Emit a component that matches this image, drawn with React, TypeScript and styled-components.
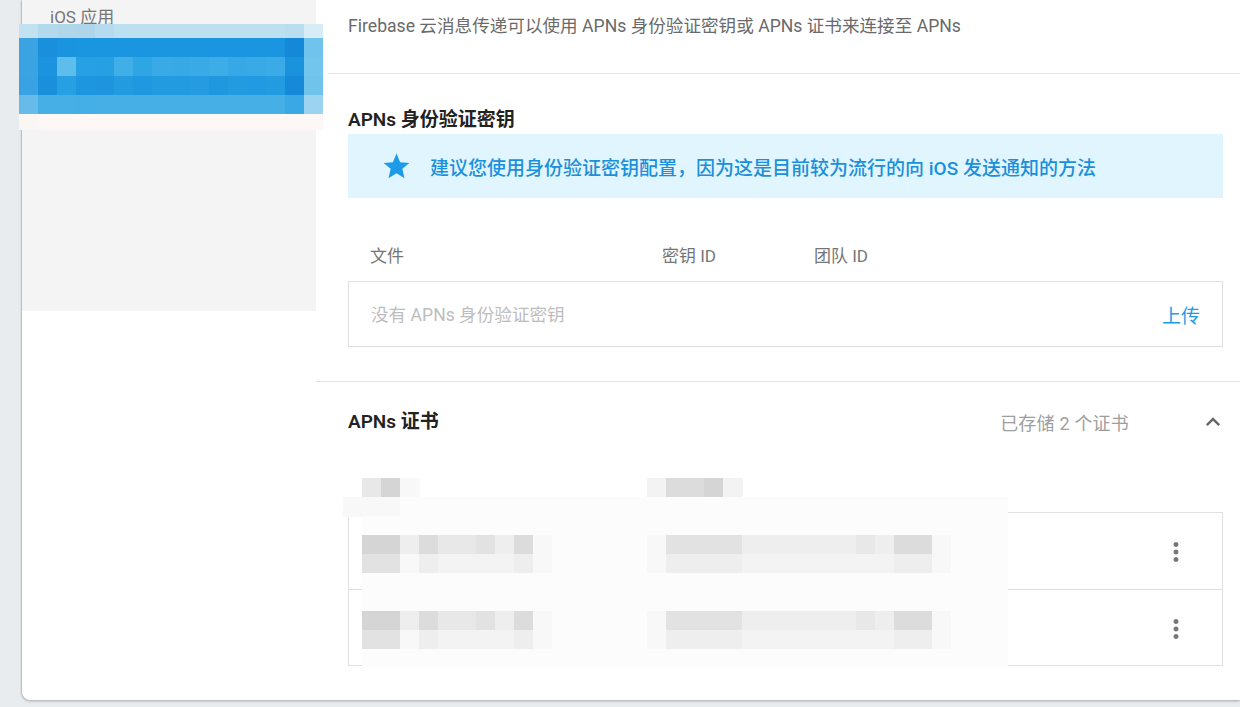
import React from "react";
import styled, { createGlobalStyle } from "styled-components";

const GlobalStyle = createGlobalStyle`
  html, body { margin: 0; padding: 0; background: #e8ecef; overflow: hidden; }
  body { font-family: Roboto, "Noto Sans CJK SC", sans-serif; }
  * { box-sizing: border-box; }
`;

const Page = styled.div`
  position: relative;
  display: flex;
  height: 707px;
  padding-left: 22px;
`;

const Card = styled.div`
  flex: 1;
  display: flex;
  height: 700px;
  background: #fff;
  border-bottom-left-radius: 8px;
  box-shadow: 0 1px 3px rgba(0, 0, 0, 0.28), -1px 0 1px rgba(0, 0, 0, 0.1);
  overflow: hidden;
`;

const Sidebar = styled.nav`
  width: 294px;
  flex-shrink: 0;
  height: 311px;
  background: #f4f4f4;
`;

const NavItem = styled.div`
  padding-left: 28px;
  line-height: 34px;
  font-size: 17px;
  color: #757575;
`;

const Main = styled.main`
  flex: 1;
  min-width: 0;
  display: flex;
  flex-direction: column;
`;

const Intro = styled.div`
  margin-left: 12px;
  padding-left: 20px;
  height: 74px;
  border-bottom: 1px solid #e3e3e3;
  font-size: 17.6px;
  line-height: 52px;
  color: #6a6a6a;
`;

const KeySection = styled.section`
  padding: 32px 17px 34px 32px;
  border-bottom: 1px solid #e3e3e3;
`;

const SectionTitle = styled.h2`
  margin: 0;
  font-size: 19px;
  line-height: 28px;
  font-weight: 600;
  color: #222;
`;

const Banner = styled.div`
  display: flex;
  align-items: center;
  gap: 18px;
  height: 64px;
  padding-left: 33px;
  background: #e1f5fe;
  color: #1b90da;
  font-size: 19px;
  font-weight: 500;
`;

const LabelRow = styled.div`
  display: grid;
  grid-template-columns: 292px 152px auto;
  padding: 46px 0 13px 22px;
  font-size: 17px;
  line-height: 24px;
  color: #757575;
`;

const UploadBox = styled.div`
  display: flex;
  align-items: center;
  justify-content: space-between;
  height: 66px;
  padding: 0 22px;
  border: 1px solid #e0e0e0;
`;

const Placeholder = styled.span`
  font-size: 17.6px;
  color: #bdbdbd;
  margin-top: -2px;
`;

const TextButton = styled.button`
  padding: 0;
  border: none;
  background: none;
  font-family: inherit;
  font-size: 19px;
  color: #1e9be2;
  cursor: pointer;
`;

const CertSection = styled.section`
  position: relative;
  padding: 0 17px 34px 32px;
`;

const CertHeader = styled.div`
  display: flex;
  align-items: center;
  justify-content: space-between;
  height: 82px;
  padding-bottom: 2px;
`;

const HeaderRight = styled.div`
  display: flex;
  align-items: center;
  gap: 70px;
  margin-right: -4px;
`;

const Count = styled.span`
  font-size: 18px;
  letter-spacing: 0.2px;
  color: #9e9e9e;
`;

const TableHead = styled.div`
  height: 48px;
`;

const Table = styled.div`
  border: 1px solid #e0e0e0;
`;

const Row = styled.div`
  display: flex;
  align-items: center;
  justify-content: flex-end;
  height: 76px;
  padding: 2px 31px 0 0;
  & + & {
    border-top: 1px solid #e0e0e0;
  }
`;

const Mosaic = styled.svg<{ $left: number; $top: number }>`
  position: absolute;
  left: ${(p) => p.$left}px;
  top: ${(p) => p.$top}px;
  display: block;
`;

const Star = () => (
  <svg width="31" height="31" viewBox="0 0 24 24">
    <path
      fill="#1e9be6"
      d="M12 17.27L18.18 21l-1.64-7.34L22 9.24l-7.19-.61L12 2 9.19 8.63 2 9.24l5.46 4.42L5.82 21z"
    />
  </svg>
);

const ChevronUp = () => (
  <svg width="28" height="28" viewBox="0 0 24 24">
    <path fill="#666" d="M12 8l-6 6 1.41 1.41L12 10.83l4.59 4.58L18 14z" />
  </svg>
);

const MoreVert = () => (
  <svg width="30" height="30" viewBox="0 0 24 24">
    <path
      fill="#777"
      d="M12 8c1.1 0 2-.9 2-2s-.9-2-2-2-2 .9-2 2 .9 2 2 2zm0 2c-1.1 0-2 .9-2 2s.9 2 2 2 2-.9 2-2-.9-2-2-2zm0 6c-1.1 0-2 .9-2 2s.9 2 2 2 2-.9 2-2-.9-2-2-2z"
    />
  </svg>
);

/* Blue pixelated (redacted) block over the sidebar */
const blueRows: { h: number; cells: string[] }[] = [
  {
    h: 14,
    cells: ["#c2e2f2", "#b3d9ed", "#b0d6ea", "#afd5ea", "#b6dbee", "#bde0f1", "#bde0f1", "#bde0f1", "#bde0f1", "#bde0f1", "#bde0f1", "#bde0f1", "#bde0f1", "#bde0f1", "#b9def0", "#d8ecf5"],
  },
  {
    h: 19,
    cells: ["#3ba3e2", "#1a8fdc", "#1a94df", "#1a96e0", "#1a96e0", "#1a96e0", "#1a96e0", "#1a96e0", "#1a96e0", "#1a96e0", "#1a96e0", "#1a96e0", "#1a96e0", "#1a96e0", "#1589d8", "#6fc3ec"],
  },
  {
    h: 19,
    cells: ["#3aa4e2", "#1c93de", "#5dbeed", "#27a1e3", "#27a0e3", "#40aee7", "#2ea6e4", "#3aaae6", "#37a9e5", "#3aaae6", "#3dace7", "#36a8e5", "#3aaae6", "#3aabe6", "#1a92dc", "#72c5ec"],
  },
  {
    h: 19,
    cells: ["#38a2e2", "#1a90dc", "#27a0e3", "#1e96df", "#1e93de", "#239be1", "#1f98e0", "#239be1", "#239be1", "#259ce1", "#1f98e0", "#239be1", "#229ae1", "#239be1", "#1689d8", "#70c4ec"],
  },
  {
    h: 19,
    cells: ["#66bbea", "#46b0e6", "#46b0e6", "#44afe6", "#46b0e6", "#46b0e6", "#46b0e6", "#46b0e6", "#46b0e6", "#46b0e6", "#46b0e6", "#46b0e6", "#46b0e6", "#46b0e6", "#3aa8e4", "#9bd3f0"],
  },
  {
    h: 16,
    cells: ["#f9f6f4", "#fdf8f5", "#fdf8f5", "#fdf8f5", "#fdf8f5", "#fdf8f5", "#fdf8f5", "#fdf8f5", "#fdf8f5", "#fdf8f5", "#fdf8f5", "#fdf8f5", "#fdf8f5", "#fdf8f5", "#fdf8f5", "#fdf8f5"],
  },
];

const BlueMosaic = () => {
  let y = 0;
  const rects: React.ReactNode[] = [];
  blueRows.forEach((row, r) => {
    row.cells.forEach((c, i) => {
      rects.push(<rect key={`${r}-${i}`} x={i * 19} y={y} width={19.5} height={row.h + 0.5} fill={c} />);
    });
    y += row.h;
  });
  return (
    <Mosaic $left={19} $top={24} width={304} height={106} viewBox="0 0 304 106" shapeRendering="crispEdges">
      {rects}
    </Mosaic>
  );
};

/* Gray pixelated (redacted) certificate data */
const palette: Record<string, string> = {
  A: "#d5d5d5",
  B: "#dcdcdc",
  C: "#e2e2e2",
  D: "#e8e8e8",
  E: "#eeeeee",
  F: "#f3f3f3",
  G: "#f8f8f8",
  w: "#fcfcfc",
};

const certRowA = ".AAEBDDCEBGwwwwwGCCCCEEEEEEDEBBGwww";
const certRowB = ".CCGEFFFFEGwwwwwGEEEEFFFFFFFFEEGwww";
const certBlank = ".wwwwwwwwwwwwwwwwwwwwwwwwwwwwwwwwww";
const certGrid = [
  "...................................",
  ".DAG............FBBAF..............",
  "GGGwwwwwwwwwwwwwwwwwwwwwwwwwwwwwwww",
  certBlank,
  certRowA,
  certRowB,
  certBlank,
  certBlank,
  certRowA,
  certRowB,
  certBlank,
];

const CertMosaic = () => (
  <Mosaic $left={27} $top={77} width={665} height={209} viewBox="0 0 665 209" shapeRendering="crispEdges">
    {certGrid.flatMap((line, r) =>
      line.split("").map((ch, c) =>
        palette[ch] ? (
          <rect key={`${r}-${c}`} x={c * 19} y={r * 19} width={19.5} height={19.5} fill={palette[ch]} />
        ) : null
      )
    )}
  </Mosaic>
);

export default function App() {
  return (
    <>
      <GlobalStyle />
      <Page>
        <Card>
          <Sidebar>
            <NavItem>iOS 应用</NavItem>
          </Sidebar>
          <Main>
            <Intro>Firebase 云消息传递可以使用 APNs 身份验证密钥或 APNs 证书来连接至 APNs</Intro>
            <KeySection>
              <SectionTitle>APNs 身份验证密钥</SectionTitle>
              <Banner>
                <Star />
                <span>建议您使用身份验证密钥配置，因为这是目前较为流行的向 iOS 发送通知的方法</span>
              </Banner>
              <LabelRow>
                <span>文件</span>
                <span>密钥 ID</span>
                <span>团队 ID</span>
              </LabelRow>
              <UploadBox>
                <Placeholder>没有 APNs 身份验证密钥</Placeholder>
                <TextButton>上传</TextButton>
              </UploadBox>
            </KeySection>
            <CertSection>
              <CertHeader>
                <SectionTitle>APNs 证书</SectionTitle>
                <HeaderRight>
                  <Count>已存储 2 个证书</Count>
                  <ChevronUp />
                </HeaderRight>
              </CertHeader>
              <TableHead />
              <Table>
                <Row>
                  <MoreVert />
                </Row>
                <Row>
                  <MoreVert />
                </Row>
              </Table>
              <CertMosaic />
            </CertSection>
          </Main>
        </Card>
        <BlueMosaic />
      </Page>
    </>
  );
}
